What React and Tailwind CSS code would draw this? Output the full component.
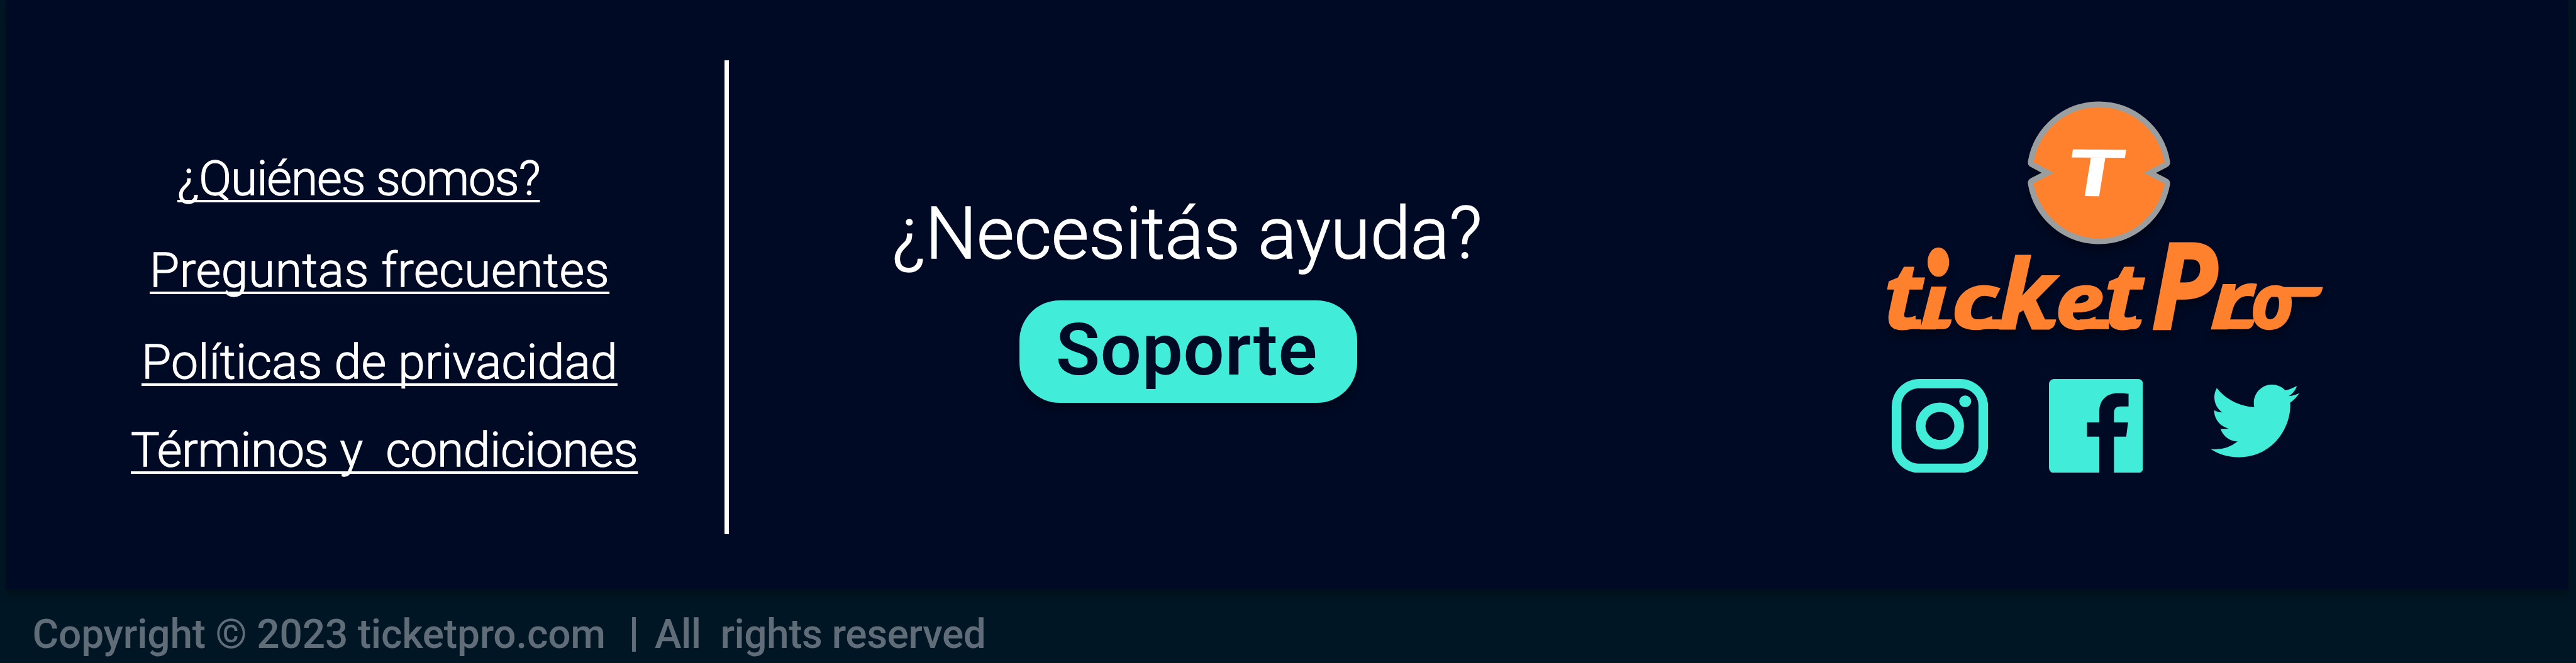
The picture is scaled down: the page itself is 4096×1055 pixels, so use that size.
const links = [
  { label: "¿Quiénes somos?", style: "ml-[273px] tracking-[-1.1px]" },
  { label: "Preguntas frecuentes", style: "ml-[229px] mt-[56px] tracking-[0.55px]" },
  { label: "Políticas de privacidad", style: "ml-[216px] mt-[56px] tracking-[0.2px]" },
  { label: "Términos y  condiciones", style: "ml-[199px] mt-[50px] tracking-[-0.4px]" },
];

const letters = [
  { char: "t", x: 3841, width: 78, stretch: 1.19 },
  { char: "c", x: 3978, width: 96, stretch: 1 },
  { char: "k", x: 4075, width: 112, stretch: 1.25 },
  { char: "e", x: 4190, width: 100, stretch: 1 },
  { char: "t", x: 4290, width: 78, stretch: 1.19 },
  { char: "P", x: 4386, width: 134, stretch: 1.56 },
  { char: "r", x: 4506, width: 86, stretch: 1.05 },
  { char: "o", x: 4588, width: 90, stretch: 1 },
];

function Logo() {
  return (
    <svg
      viewBox="3830 190 920 520"
      className="ml-[366px] mt-[148px] block h-[405.5px] w-[717.4px] overflow-visible drop-shadow-[0_11px_6px_rgba(0,0,0,0.3)]"
      role="img"
      aria-label="ticketPro"
    >
      <defs>
        <clipPath id="stem">
          <rect x="3890" y="585" width="110" height="100" />
        </clipPath>
      </defs>
      <path
        d="M4146 331A135.5 135.5 0 0 1 4413 331L4371 353L4413 375A135.5 135.5 0 0 1 4146 374L4187 353Z"
        fill="#ff812e"
        stroke="#9b9e9f"
        strokeWidth="23"
        strokeLinejoin="round"
        paintOrder="stroke"
      />
      <text
        transform="translate(4265.5 400.5) rotate(.6) skewX(-8.5) scale(1.38 1)"
        textAnchor="middle"
        className="fill-white font-['Roboto'] text-[134px] font-extrabold"
      >
        T
      </text>
      <g className="fill-[#ff812e] stroke-[#ff812e] stroke-3 font-['Open_Sans'] text-[156px] font-bold italic">
        {letters.map(({ char, x, width, stretch }) => (
          <text
            key={x}
            transform={`translate(${x} 671) scale(1 ${stretch})`}
            textLength={width}
            lengthAdjust="spacingAndGlyphs"
          >
            {char}
          </text>
        ))}
        <g clipPath="url(#stem)">
          <text x="3914" y="671" textLength="56" lengthAdjust="spacingAndGlyphs">
            i
          </text>
        </g>
        <ellipse cx="3952" cy="535" rx="20.5" ry="28.5" />
      </g>
      <path
        d="M3870 652H3917V672H3860ZM3945 652H3979Q3977 672 3961 672H3930ZM4020 652H4080V672H4020ZM4155 652H4192Q4190 672 4175 672H4150ZM4240 652H4300V672H4240ZM4325 652H4367Q4364 672 4350 672H4320ZM4535 652H4597Q4594 672 4580 672H4535Z"
        fill="#ff812e"
      />
      <path d="M4632 586H4736Q4733 606 4718 606H4632Z" fill="#ff812e" />
    </svg>
  );
}

function Instagram() {
  return (
    <svg viewBox="2 2 20 20" preserveAspectRatio="none" className="h-[149.7px] w-[153.2px]" fill="currentColor">
      <path d="M7.8 2h8.4C19.4 2 22 4.6 22 7.8v8.4a5.8 5.8 0 0 1-5.8 5.8H7.8C4.6 22 2 19.4 2 16.2V7.8A5.8 5.8 0 0 1 7.8 2m-.2 2A3.6 3.6 0 0 0 4 7.6v8.8C4 18.39 5.61 20 7.6 20h8.8a3.6 3.6 0 0 0 3.6-3.6V7.6C20 5.61 18.39 4 16.4 4H7.6m9.65 1.5a1.25 1.25 0 0 1 1.25 1.25A1.25 1.25 0 0 1 17.25 8 1.25 1.25 0 0 1 16 6.75a1.25 1.25 0 0 1 1.25-1.25M12 7a5 5 0 0 1 5 5 5 5 0 0 1-5 5 5 5 0 0 1-5-5 5 5 0 0 1 5-5m0 2a3 3 0 0 0-3 3 3 3 0 0 0 3 3 3 3 0 0 0 3-3 3 3 0 0 0-3-3z" />
    </svg>
  );
}

function Facebook() {
  return (
    <svg viewBox="0 0 24 24" className="ml-[97px] h-[149.8px] w-[149.8px]" fill="currentColor">
      <path d="M22.676 0H1.324C.593 0 0 .593 0 1.324v21.352C0 23.408.593 24 1.324 24h11.494v-9.294H9.689v-3.621h3.129V8.41c0-3.099 1.894-4.785 4.659-4.785 1.325 0 2.464.097 2.796.141v3.24h-1.921c-1.5 0-1.792.721-1.792 1.771v2.311h3.584l-.465 3.63H16.56V24h6.115c.733 0 1.325-.592 1.325-1.324V1.324C24 .593 23.408 0 22.676 0" />
    </svg>
  );
}

function Twitter() {
  return (
    <svg viewBox="1.54 4 20.92 17" preserveAspectRatio="none" className="ml-[107.5px] mt-[9.6px] h-[115.7px] w-[141.1px]" fill="currentColor">
      <path d="M22.46 6c-.77.35-1.6.58-2.46.69.88-.53 1.56-1.37 1.88-2.38-.83.5-1.75.85-2.72 1.05C18.37 4.5 17.26 4 16 4c-2.35 0-4.27 1.92-4.27 4.29 0 .34.04.67.11.98C8.28 9.09 5.11 7.38 3 4.79c-.37.63-.58 1.37-.58 2.15 0 1.49.75 2.81 1.91 3.56-.71 0-1.37-.2-1.95-.5v.03c0 2.08 1.48 3.82 3.44 4.21a4.22 4.22 0 0 1-1.93.07 4.28 4.28 0 0 0 4 2.98 8.521 8.521 0 0 1-5.33 1.84c-.34 0-.68-.02-1.02-.06C3.44 20.29 5.7 21 8.12 21 16 21 20.33 14.46 20.33 8.79c0-.19 0-.37-.01-.56.84-.6 1.56-1.36 2.14-2.23z" />
    </svg>
  );
}

export default function App() {
  return (
    <footer className="flex h-[1055px] w-[4096px] flex-col overflow-hidden bg-[#001624] font-['Roboto',sans-serif]">
      <div className="ml-[9px] flex h-[937.6px] w-[4074.6px] shrink-0 bg-[#000a25] shadow-[0_11.4px_11.4px_rgba(0,0,0,0.25)]">
        <nav className="flex w-[1143px] shrink-0 flex-col items-start pt-[239px]">
          {links.map(({ label, style }) => (
            <a
              key={label}
              href="#"
              className={`${style} whitespace-pre text-[76.8px] leading-[90px] font-light text-white underline decoration-4 underline-offset-[8px] [-webkit-text-stroke:1.3px_white] [text-decoration-skip-ink:none]`}
            >
              {label}
            </a>
          ))}
        </nav>
        <div className="mt-[96px] h-[754px] w-[6.5px] shrink-0 bg-white" />
        <section className="flex w-[1462px] shrink-0 flex-col items-center pt-[301.5px]">
          <h2 className="pr-[4px] whitespace-nowrap text-[115.4px] leading-[140px] font-light tracking-[-0.2px] text-white [-webkit-text-stroke:1.6px_white]">
            ¿Necesitás ayuda?
          </h2>
          <button className="mt-[36px] flex h-[163.3px] w-[536.2px] items-center justify-center rounded-[64px] bg-[#41ecd8] pr-[5px] pb-[4px] text-[115px] font-semibold tracking-[1px] text-[#000a25] shadow-[0_11.4px_11.4px_rgba(0,0,0,0.25)]">
            Soporte
          </button>
        </section>
        <section className="flex flex-col">
          <Logo />
          <div className="mt-[49px] ml-[387px] flex items-start text-[#41ecd8]">
            <Instagram />
            <Facebook />
            <Twitter />
          </div>
        </section>
      </div>
      <div className="flex items-start pt-[32px] pl-[51.5px] text-[64px] leading-[80px] font-medium whitespace-nowrap text-[#616c79]">
        <span className="w-[953px] shrink-0 tracking-[-0.2px]">Copyright © 2023 ticketpro.com</span>
        <span className="mt-[12.5px] flex w-[6px] shrink-0 justify-center overflow-visible">
          <span className="h-[55px] w-[6px] bg-[#616c79]" />
        </span>
        <span className="ml-[30.5px] whitespace-pre tracking-[-0.5px]">All  rights reserved</span>
      </div>
    </footer>
  );
}
